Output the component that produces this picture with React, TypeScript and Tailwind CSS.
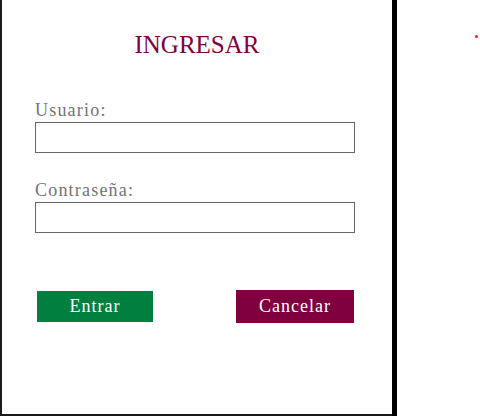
const serif = { fontFamily: '"Liberation Serif", "Times New Roman", serif' };

const Field = ({ label, top }: { label: string; top: string }) => (
  <div className={`flex flex-col ${top}`}>
    <label className="text-[18px] leading-[22px] tracking-[1.2px] text-[#737373]">
      {label}
    </label>
    <input
      type="text"
      className="mt-[1px] h-[31px] w-[320px] border border-[#666666] bg-white outline-none"
    />
  </div>
);

export default function App() {
  return (
    <div className="flex h-[416px] w-[480px] bg-white" style={serif}>
      <div className="flex h-[416px] w-[392px] shrink-0 flex-col border-b-2 border-l-2 border-[#1a1a1a] bg-white pl-[33px]">
        <h1 className="mt-[30px] pr-[33px] text-center text-[25px] leading-[30px] text-[#7f003f]">
          INGRESAR
        </h1>
        <Field label="Usuario:" top="mt-[39px]" />
        <Field label="Contraseña:" top="mt-[26px]" />
        <div className="mt-[57px] flex w-[319px] items-center justify-between">
          <button className="ml-[2px] h-[31px] w-[116px] bg-[#007f3f] text-[18px] tracking-[1px] text-white">
            Entrar
          </button>
          <button className="h-[33px] w-[118px] bg-[#7f003f] text-[18px] tracking-[1px] text-white">
            Cancelar
          </button>
        </div>
      </div>
      <div className="h-[416px] w-[5px] shrink-0 bg-black" />
      <div className="flex-1 pl-[78px] pt-[35px]">
        <div className="h-[3px] w-[3px] rounded-full bg-[#ff1a1a]" />
      </div>
    </div>
  );
}
